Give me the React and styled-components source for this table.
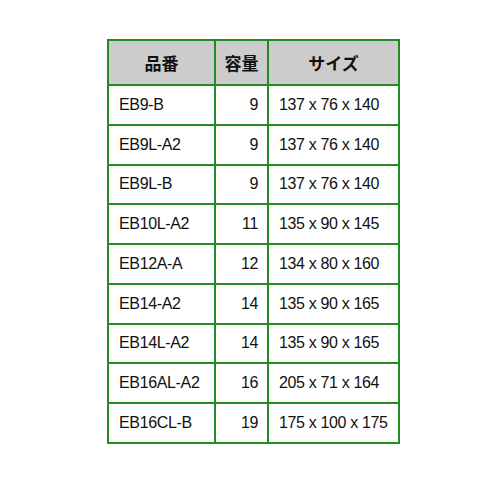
import styled, { createGlobalStyle } from "styled-components";

const GlobalStyle = createGlobalStyle`
  html, body {
    margin: 0;
    padding: 0;
    background: #ffffff;
  }
`;

const Page = styled.div`
  width: 500px;
  height: 500px;
  box-sizing: border-box;
  padding: 39px 0 0 107px;
  background: #ffffff;
`;

const Table = styled.table`
  border-collapse: collapse;
  table-layout: fixed;
  width: 291px;
  font-family: "Liberation Sans", Arial, sans-serif;
  font-size: 16px;
  letter-spacing: -0.35px;
  color: #111111;
`;

const Head = styled.th`
  height: 43px;
  padding: 0;
  background: #cccccc;
  border: 2px solid #228b22;
  font-family: "Liberation Sans", "Noto Sans CJK JP", sans-serif;
  font-weight: 700;
  font-size: 17px;
  letter-spacing: 0;
  text-align: center;
  color: #111111;
`;

const Cell = styled.td`
  height: 37.75px;
  padding: 0 ${(p) => (p.$num ? "9px" : "0")} 0 ${(p) => (p.$num ? "0" : "10px")};
  border: 2px solid #228b22;
  text-align: ${(p) => (p.$num ? "right" : "left")};
  white-space: nowrap;
`;

const rows = [
  ["EB9-B", 9, "137 x 76 x 140"],
  ["EB9L-A2", 9, "137 x 76 x 140"],
  ["EB9L-B", 9, "137 x 76 x 140"],
  ["EB10L-A2", 11, "135 x 90 x 145"],
  ["EB12A-A", 12, "134 x 80 x 160"],
  ["EB14-A2", 14, "135 x 90 x 165"],
  ["EB14L-A2", 14, "135 x 90 x 165"],
  ["EB16AL-A2", 16, "205 x 71 x 164"],
  ["EB16CL-B", 19, "175 x 100 x 175"],
];

export default function App() {
  return (
    <>
      <GlobalStyle />
      <Page>
        <Table>
          <colgroup>
            <col style={{ width: 107 }} />
            <col style={{ width: 53 }} />
            <col style={{ width: 131 }} />
          </colgroup>
          <thead>
            <tr>
              <Head>品番</Head>
              <Head>容量</Head>
              <Head>サイズ</Head>
            </tr>
          </thead>
          <tbody>
            {rows.map((r) => (
              <tr key={r[0]}>
                <Cell>{r[0]}</Cell>
                <Cell $num>{r[1]}</Cell>
                <Cell>{r[2]}</Cell>
              </tr>
            ))}
          </tbody>
        </Table>
      </Page>
    </>
  );
}
